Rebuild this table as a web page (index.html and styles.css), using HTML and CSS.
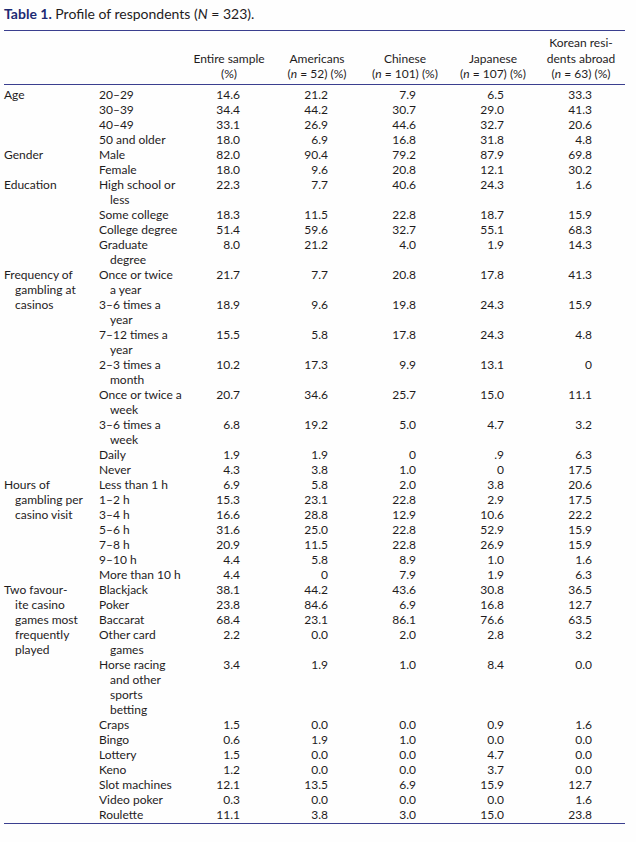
FILE: index.html
```html
<!DOCTYPE html>
<html lang="en">
<head>
<meta charset="utf-8">
<title>Table 1. Profile of respondents</title>
<link rel="stylesheet" href="styles.css">
</head>
<body>
<div class="wrap">
  <p class="caption"><span class="label">Table 1.</span> Profile of respondents (<i>N</i> = 323).</p>
  <table class="data">
    <colgroup>
      <col class="c-cat"><col class="c-sub"><col class="c-num"><col class="c-num"><col class="c-num"><col class="c-num"><col class="c-num">
    </colgroup>
    <thead>
      <tr>
        <th></th><th></th>
        <th>Entire sample<br>(%)</th>
        <th>Americans<br>(<i>n</i> = 52) (%)</th>
        <th>Chinese<br>(<i>n</i> = 101) (%)</th>
        <th>Japanese<br>(<i>n</i> = 107) (%)</th>
        <th>Korean resi-<br>dents abroad<br>(<i>n</i> = 63) (%)</th>
      </tr>
    </thead>
    <tbody>
      <tr><td class="cat">Age</td><td class="sub">20–29</td><td>14.6</td><td>21.2</td><td>7.9</td><td>6.5</td><td>33.3</td></tr>
      <tr><td></td><td class="sub">30–39</td><td>34.4</td><td>44.2</td><td>30.7</td><td>29.0</td><td>41.3</td></tr>
      <tr><td></td><td class="sub">40–49</td><td>33.1</td><td>26.9</td><td>44.6</td><td>32.7</td><td>20.6</td></tr>
      <tr><td></td><td class="sub">50 and older</td><td>18.0</td><td>6.9</td><td>16.8</td><td>31.8</td><td>4.8</td></tr>
      <tr><td class="cat">Gender</td><td class="sub">Male</td><td>82.0</td><td>90.4</td><td>79.2</td><td>87.9</td><td>69.8</td></tr>
      <tr><td></td><td class="sub">Female</td><td>18.0</td><td>9.6</td><td>20.8</td><td>12.1</td><td>30.2</td></tr>
      <tr><td class="cat">Education</td><td class="sub">High school or<br>less</td><td>22.3</td><td>7.7</td><td>40.6</td><td>24.3</td><td>1.6</td></tr>
      <tr><td></td><td class="sub">Some college</td><td>18.3</td><td>11.5</td><td>22.8</td><td>18.7</td><td>15.9</td></tr>
      <tr><td></td><td class="sub">College degree</td><td>51.4</td><td>59.6</td><td>32.7</td><td>55.1</td><td>68.3</td></tr>
      <tr><td></td><td class="sub">Graduate<br>degree</td><td>8.0</td><td>21.2</td><td>4.0</td><td>1.9</td><td>14.3</td></tr>
      <tr><td class="cat" rowspan="8">Frequency of<br>gambling at<br>casinos</td><td class="sub">Once or twice<br>a year</td><td>21.7</td><td>7.7</td><td>20.8</td><td>17.8</td><td>41.3</td></tr>
      <tr><td class="sub">3–6 times a<br>year</td><td>18.9</td><td>9.6</td><td>19.8</td><td>24.3</td><td>15.9</td></tr>
      <tr><td class="sub">7–12 times a<br>year</td><td>15.5</td><td>5.8</td><td>17.8</td><td>24.3</td><td>4.8</td></tr>
      <tr><td class="sub">2–3 times a<br>month</td><td>10.2</td><td>17.3</td><td>9.9</td><td>13.1</td><td>0</td></tr>
      <tr><td class="sub">Once or twice a<br>week</td><td>20.7</td><td>34.6</td><td>25.7</td><td>15.0</td><td>11.1</td></tr>
      <tr><td class="sub">3–6 times a<br>week</td><td>6.8</td><td>19.2</td><td>5.0</td><td>4.7</td><td>3.2</td></tr>
      <tr><td class="sub">Daily</td><td>1.9</td><td>1.9</td><td>0</td><td>.9</td><td>6.3</td></tr>
      <tr><td class="sub">Never</td><td>4.3</td><td>3.8</td><td>1.0</td><td>0</td><td>17.5</td></tr>
      <tr><td class="cat" rowspan="7">Hours of<br>gambling per<br>casino visit</td><td class="sub">Less than 1 h</td><td>6.9</td><td>5.8</td><td>2.0</td><td>3.8</td><td>20.6</td></tr>
      <tr><td class="sub">1–2 h</td><td>15.3</td><td>23.1</td><td>22.8</td><td>2.9</td><td>17.5</td></tr>
      <tr><td class="sub">3–4 h</td><td>16.6</td><td>28.8</td><td>12.9</td><td>10.6</td><td>22.2</td></tr>
      <tr><td class="sub">5–6 h</td><td>31.6</td><td>25.0</td><td>22.8</td><td>52.9</td><td>15.9</td></tr>
      <tr><td class="sub">7–8 h</td><td>20.9</td><td>11.5</td><td>22.8</td><td>26.9</td><td>15.9</td></tr>
      <tr><td class="sub">9–10 h</td><td>4.4</td><td>5.8</td><td>8.9</td><td>1.0</td><td>1.6</td></tr>
      <tr><td class="sub">More than 10 h</td><td>4.4</td><td>0</td><td>7.9</td><td>1.9</td><td>6.3</td></tr>
      <tr><td class="cat" rowspan="12">Two favour-<br>ite casino<br>games most<br>frequently<br>played</td><td class="sub">Blackjack</td><td>38.1</td><td>44.2</td><td>43.6</td><td>30.8</td><td>36.5</td></tr>
      <tr><td class="sub">Poker</td><td>23.8</td><td>84.6</td><td>6.9</td><td>16.8</td><td>12.7</td></tr>
      <tr><td class="sub">Baccarat</td><td>68.4</td><td>23.1</td><td>86.1</td><td>76.6</td><td>63.5</td></tr>
      <tr><td class="sub">Other card<br>games</td><td>2.2</td><td>0.0</td><td>2.0</td><td>2.8</td><td>3.2</td></tr>
      <tr><td class="sub">Horse racing<br>and other<br>sports<br>betting</td><td>3.4</td><td>1.9</td><td>1.0</td><td>8.4</td><td>0.0</td></tr>
      <tr><td class="sub">Craps</td><td>1.5</td><td>0.0</td><td>0.0</td><td>0.9</td><td>1.6</td></tr>
      <tr><td class="sub">Bingo</td><td>0.6</td><td>1.9</td><td>1.0</td><td>0.0</td><td>0.0</td></tr>
      <tr><td class="sub">Lottery</td><td>1.5</td><td>0.0</td><td>0.0</td><td>4.7</td><td>0.0</td></tr>
      <tr><td class="sub">Keno</td><td>1.2</td><td>0.0</td><td>0.0</td><td>3.7</td><td>0.0</td></tr>
      <tr><td class="sub">Slot machines</td><td>12.1</td><td>13.5</td><td>6.9</td><td>15.9</td><td>12.7</td></tr>
      <tr><td class="sub">Video poker</td><td>0.3</td><td>0.0</td><td>0.0</td><td>0.0</td><td>1.6</td></tr>
      <tr><td class="sub">Roulette</td><td>11.1</td><td>3.8</td><td>3.0</td><td>15.0</td><td>23.8</td></tr>
    </tbody>
  </table>
</div>
</body>
</html>
```
FILE: styles.css
```css
html, body {
  margin: 0;
  padding: 0;
  background: #fefefe;
}
body {
  font-family: Lato, "Open Sans", sans-serif;
  color: #1f1c1d;
  font-size: 12px;
}
.wrap {
  padding: 5px 0 0 4px;
}
.caption {
  margin: 0 0 7px 0;
  font-size: 14px;
  line-height: 18px;
}
.caption .label {
  font-weight: bold;
  color: #1c2a73;
}
.data {
  border-collapse: collapse;
  table-layout: fixed;
  width: 621px;
  border-top: 1px solid #3b3f8f;
  border-bottom: 1px solid #3b3f8f;
}
.c-cat { width: 88px; }
.c-sub { width: 93px; }
.c-num { width: 88px; }
.data th {
  font-weight: normal;
  text-align: center;
  vertical-align: bottom;
  line-height: 15.5px;
  padding: 4px 0 2px 0;
  border-bottom: 1px solid #3b3f8f;
}
.data td {
  padding: 0 33px 0 0;
  line-height: 15px;
  text-align: right;
  vertical-align: top;
  white-space: nowrap;
}
.data tbody tr:first-child td { padding-top: 2px; }
.data tbody tr:last-child td { padding-bottom: 1px; }
.data td.cat,
.data td.sub {
  text-align: left;
  text-indent: -11px;
  padding-right: 0;
}
.data td.cat { padding-left: 11px; }
.data td.sub { padding-left: 18px; }
```
